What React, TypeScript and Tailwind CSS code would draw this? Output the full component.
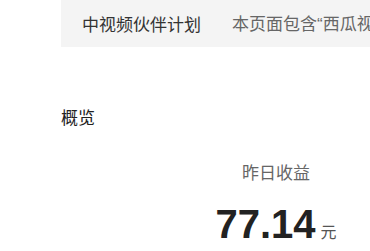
export default function App() {
  return (
    <div
      className="w-[370px] h-[251px] overflow-hidden bg-white text-[#333]"
      style={{ fontFamily: '"Noto Sans CJK SC", "Liberation Sans", sans-serif' }}
    >
      <div className="ml-[61px] h-[47px] bg-[#f4f4f4] flex items-center pl-[21px] whitespace-nowrap overflow-hidden text-[17px] leading-none">
        <span className="text-[#333]">中视频伙伴计划</span>
        <span className="ml-[15px] mr-[16px] h-[18px] w-px bg-[#d6d6d6]" />
        <span className="text-[#666]">
          本页面包含
          <span style={{ fontFamily: '"Liberation Sans", sans-serif' }}>“</span>
          西瓜视频
          <span style={{ fontFamily: '"Liberation Sans", sans-serif' }}>”</span>
          相关内容
        </span>
      </div>
      <div className="pl-[61px] pt-[61px] text-[17px] leading-none text-[#222]">概览</div>
      <div className="flex flex-col items-center pl-[182px] pt-[38px]">
        <div className="text-[17px] leading-none text-[#666]">昨日收益</div>
        <div className="mt-[24px] flex items-baseline">
          <span
            className="text-[40px] leading-none font-bold text-[#222]"
            style={{ fontFamily: '"Liberation Sans", sans-serif' }}
          >
            77.14
          </span>
          <span className="ml-[5px] text-[16px] text-[#555]">元</span>
        </div>
      </div>
    </div>
  );
}
